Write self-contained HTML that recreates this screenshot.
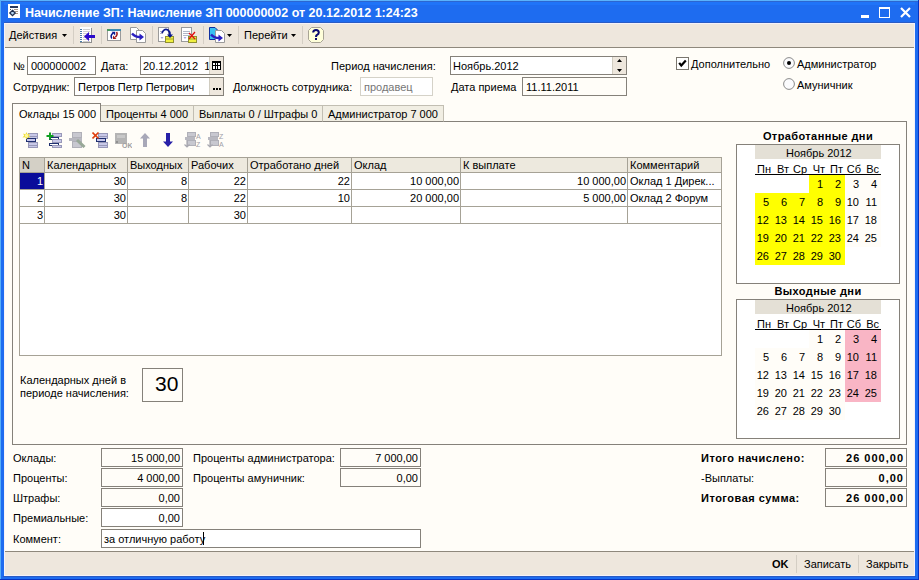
<!DOCTYPE html><html><head><meta charset="utf-8"><style>
html,body{margin:0;padding:0;}
body{width:919px;height:580px;overflow:hidden;position:relative;background:#FFFDF8;font-family:'Liberation Sans', sans-serif;}
.t{position:absolute;font-size:11px;line-height:13px;white-space:nowrap;color:#000;}
.b{position:absolute;box-sizing:border-box;}
svg{position:absolute;}
</style></head><body>
<div class="b" style="left:0px;top:0px;width:919px;height:580px;background:#1E6CF0;"></div>
<div class="b" style="left:0px;top:0px;width:919px;height:1px;background:#5AB2FC;"></div>
<div class="b" style="left:1px;top:1px;width:917px;height:1px;background:#2C66D0;"></div>
<div class="b" style="left:4px;top:2px;width:911px;height:3px;background:#2074F8;"></div>
<div class="b" style="left:0px;top:0px;width:1px;height:580px;background:#56AEF8;"></div>
<div class="b" style="left:918px;top:0px;width:1px;height:580px;background:#0634C2;"></div>
<div class="b" style="left:0px;top:579px;width:919px;height:1px;background:#0634C2;"></div>
<div class="b" style="left:4px;top:22px;width:911px;height:1px;background:#2A5CC4;"></div>
<div class="b" style="left:3px;top:576px;width:913px;height:1px;background:#2A5CC4;"></div>
<div class="b" style="left:4px;top:23px;width:911px;height:553px;background:#F4F2FA;"></div>
<div class="b" style="left:5px;top:24px;width:909px;height:551px;background:#FFFDF8;"></div>
<svg style="left:8px;top:4px" width="12" height="14" viewBox="0 0 12 14"><rect x="0" y="0" width="12" height="14" fill="#fff"/><rect x="2" y="2" width="8" height="2" fill="#28385C"/><rect x="2" y="5" width="1" height="1" fill="#505050"/><rect x="6" y="5" width="4" height="1" fill="#A89888"/><rect x="7" y="7" width="3" height="1" fill="#A89888"/><rect x="7" y="9" width="3" height="1" fill="#A89888"/><path d="M4.5 6.3 L7.2 9 L4.5 11.7 L1.8 9 Z" fill="#B8D8F0" stroke="#203050" stroke-width="1.3"/></svg>
<div class="t" style="left:25px;top:7px;color:#fff;font-weight:bold;font-size:12.5px;">Начисление ЗП: Начисление ЗП 000000002 от 20.12.2012 1:24:23</div>
<div class="b" style="left:861px;top:15px;width:8px;height:3px;background:#fff;"></div>
<div class="b" style="left:879px;top:7px;width:11px;height:11px;border:1px solid #fff;border-top-width:2px;"></div>
<svg style="left:900px;top:7px" width="11" height="11" viewBox="0 0 11 11"><path d="M1 1 L10 10 M10 1 L1 10" stroke="#fff" stroke-width="2.2"/></svg>
<div class="b" style="left:5px;top:24px;width:909px;height:23px;background:#EEE7DD;"></div>
<div class="b" style="left:5px;top:47px;width:909px;height:1px;background:#8E887C;"></div>
<div class="t" style="left:9px;top:29px;">Действия</div>
<svg style="left:62px;top:34px" width="5" height="3"><path d="M0 0 H5 L2.5 3 Z" fill="#000"/></svg>
<div class="b" style="left:73px;top:26px;width:1px;height:18px;background:#D4CEC4;"></div>
<div class="b" style="left:101px;top:26px;width:1px;height:18px;background:#D4CEC4;"></div>
<div class="b" style="left:152px;top:26px;width:1px;height:18px;background:#D4CEC4;"></div>
<div class="b" style="left:203px;top:26px;width:1px;height:18px;background:#D4CEC4;"></div>
<div class="b" style="left:238px;top:26px;width:1px;height:18px;background:#D4CEC4;"></div>
<div class="b" style="left:302px;top:26px;width:1px;height:18px;background:#D4CEC4;"></div>
<div class="t" style="left:244px;top:29px;">Перейти</div>
<svg style="left:291px;top:34px" width="5" height="3"><path d="M0 0 H5 L2.5 3 Z" fill="#000"/></svg>
<svg style="left:227px;top:34px" width="5" height="3"><path d="M0 0 H5 L2.5 3 Z" fill="#000"/></svg>
<div class="t" style="left:13px;top:60px;">№</div>
<div class="b" style="left:27px;top:56px;width:69px;height:19px;background:#fff;border:1px solid #85817A;"></div>
<div class="t" style="left:31px;top:60px;">000000002</div>
<div class="t" style="left:101px;top:60px;">Дата:</div>
<div class="b" style="left:140px;top:56px;width:84px;height:19px;background:#fff;border:1px solid #85817A;"></div>
<div class="t" style="left:143px;top:60px;">20.12.2012&nbsp; 1</div>
<div class="b" style="left:209px;top:57px;width:14px;height:17px;background:#EEE7DD;border-left:1px solid #D0CCC0;"></div>
<svg style="left:212px;top:61px" width="9" height="9" viewBox="0 0 9 9"><rect x="0" y="0" width="9" height="9" fill="#000"/><rect x="1" y="2" width="2" height="2" fill="#fff"/><rect x="4" y="2" width="1" height="2" fill="#fff"/><rect x="6" y="2" width="2" height="2" fill="#fff"/><rect x="1" y="5" width="2" height="3" fill="#fff"/><rect x="4" y="5" width="1" height="3" fill="#fff"/><rect x="6" y="5" width="2" height="3" fill="#fff"/></svg>
<div class="t" style="left:331px;top:60px;">Период начисления:</div>
<div class="b" style="left:450px;top:56px;width:177px;height:19px;background:#fff;border:1px solid #85817A;"></div>
<div class="t" style="left:453px;top:60px;">Ноябрь.2012</div>
<div class="b" style="left:612px;top:57px;width:14px;height:17px;background:#EEE7DD;border-left:1px solid #D0CCC0;"></div>
<svg style="left:617px;top:59px" width="5" height="13"><path d="M0 3 L2.5 0 L5 3 Z M0 10 L5 10 L2.5 13 Z" fill="#000"/></svg>
<div class="t" style="left:13px;top:81px;">Сотрудник:</div>
<div class="b" style="left:74px;top:77px;width:150px;height:19px;background:#fff;border:1px solid #85817A;"></div>
<div class="t" style="left:78px;top:81px;">Петров Петр Петрович</div>
<div class="b" style="left:209px;top:78px;width:14px;height:17px;background:#EEE7DD;border-left:1px solid #D0CCC0;"></div>
<svg style="left:213px;top:88px" width="8" height="2"><rect x="0" y="0" width="2" height="2" fill="#000"/><rect x="3" y="0" width="2" height="2" fill="#000"/><rect x="6" y="0" width="2" height="2" fill="#000"/></svg>
<div class="t" style="left:233px;top:81px;">Должность сотрудника:</div>
<div class="b" style="left:360px;top:77px;width:73px;height:19px;background:#fff;border:1px solid #D5D2C8;"></div>
<div class="t" style="left:364px;top:81px;color:#767676;">продавец</div>
<div class="t" style="left:451px;top:81px;">Дата приема</div>
<div class="b" style="left:522px;top:77px;width:105px;height:19px;background:#FFFDF8;border:1px solid #85817A;"></div>
<div class="t" style="left:526px;top:81px;">11.11.2011</div>
<div class="b" style="left:676px;top:57px;width:13px;height:13px;background:#fff;border:1px solid #7A766E;"></div>
<svg style="left:678px;top:59px" width="9" height="9" viewBox="0 0 9 9"><path d="M1.2 3.8 L3.3 6.6 L7.8 1.6" fill="none" stroke="#000" stroke-width="2.2"/></svg>
<div class="t" style="left:691px;top:58px;">Дополнительно</div>
<svg style="left:783px;top:57px" width="12" height="12" viewBox="0 0 12 12"><circle cx="6" cy="6" r="5.4" fill="#FBFBFD" stroke="#8A8A8A"/><circle cx="6" cy="6" r="2" fill="#000"/></svg>
<div class="t" style="left:797px;top:58px;">Администратор</div>
<svg style="left:783px;top:78px" width="12" height="12" viewBox="0 0 12 12"><circle cx="6" cy="6" r="5.4" fill="#FBFBFD" stroke="#8A8A8A"/></svg>
<div class="t" style="left:797px;top:79px;">Амуничник</div>
<div class="b" style="left:12px;top:121px;width:895px;height:324px;border:1px solid #85817A;"></div>
<div class="b" style="left:100px;top:105px;width:94px;height:17px;background:#F1EEE3;border:1px solid #C2BEB2;border-bottom-color:#85817A;"></div>
<div class="b" style="left:193px;top:105px;width:130px;height:17px;background:#F1EEE3;border:1px solid #C2BEB2;border-bottom-color:#85817A;"></div>
<div class="b" style="left:322px;top:105px;width:122px;height:17px;background:#F1EEE3;border:1px solid #C2BEB2;border-bottom-color:#85817A;"></div>
<div class="b" style="left:12px;top:103px;width:89px;height:19px;background:#FFFDF8;border:1px solid #85817A;border-bottom:none;"></div>
<div class="t" style="left:19px;top:108px;">Оклады 15 000</div>
<div class="t" style="left:106px;top:108px;">Проценты 4 000</div>
<div class="t" style="left:199px;top:108px;">Выплаты 0 / Штрафы 0</div>
<div class="t" style="left:328px;top:108px;">Администратор 7 000</div>
<div class="b" style="left:19px;top:157px;width:703px;height:199px;background:#fff;border:1px solid #A6A296;"></div>
<div class="b" style="left:20px;top:158px;width:701px;height:14px;background:#EDE9DE;"></div>
<div class="b" style="left:20px;top:158px;width:24px;height:14px;background:#D4D0C6;"></div>
<div class="t" style="left:22px;top:159px;">N</div>
<div class="t" style="left:47px;top:159px;">Календарных</div>
<div class="t" style="left:130px;top:159px;">Выходных</div>
<div class="t" style="left:191px;top:159px;">Рабочих</div>
<div class="t" style="left:250px;top:159px;">Отработано дней</div>
<div class="t" style="left:354px;top:159px;">Оклад</div>
<div class="t" style="left:463px;top:159px;">К выплате</div>
<div class="t" style="left:630px;top:159px;">Комментарий</div>
<div class="b" style="left:44px;top:158px;width:1px;height:66px;background:#A6A296;"></div>
<div class="b" style="left:127px;top:158px;width:1px;height:66px;background:#A6A296;"></div>
<div class="b" style="left:188px;top:158px;width:1px;height:66px;background:#A6A296;"></div>
<div class="b" style="left:247px;top:158px;width:1px;height:66px;background:#A6A296;"></div>
<div class="b" style="left:351px;top:158px;width:1px;height:66px;background:#A6A296;"></div>
<div class="b" style="left:460px;top:158px;width:1px;height:66px;background:#A6A296;"></div>
<div class="b" style="left:627px;top:158px;width:1px;height:66px;background:#A6A296;"></div>
<div class="b" style="left:20px;top:172px;width:701px;height:1px;background:#A6A296;"></div>
<div class="b" style="left:20px;top:189px;width:701px;height:1px;background:#A6A296;"></div>
<div class="b" style="left:20px;top:206px;width:701px;height:1px;background:#A6A296;"></div>
<div class="b" style="left:20px;top:223px;width:701px;height:1px;background:#A6A296;"></div>
<div class="b" style="left:20px;top:173px;width:24px;height:16px;background:#0A0C9A;"></div>
<div class="t" style="right:876px;top:175px;color:#fff;">1</div>
<div class="t" style="right:793px;top:175px;">30</div>
<div class="t" style="right:732px;top:175px;">8</div>
<div class="t" style="right:673px;top:175px;">22</div>
<div class="t" style="right:569px;top:175px;">22</div>
<div class="t" style="right:460px;top:175px;">10 000,00</div>
<div class="t" style="right:293px;top:175px;">10 000,00</div>
<div class="t" style="left:630px;top:175px;">Оклад 1 Дирек...</div>
<div class="t" style="right:876px;top:192px;">2</div>
<div class="t" style="right:793px;top:192px;">30</div>
<div class="t" style="right:732px;top:192px;">8</div>
<div class="t" style="right:673px;top:192px;">22</div>
<div class="t" style="right:569px;top:192px;">10</div>
<div class="t" style="right:460px;top:192px;">20 000,00</div>
<div class="t" style="right:293px;top:192px;">5 000,00</div>
<div class="t" style="left:630px;top:192px;">Оклад 2 Форум</div>
<div class="t" style="right:876px;top:209px;">3</div>
<div class="t" style="right:793px;top:209px;">30</div>
<div class="t" style="right:673px;top:209px;">30</div>
<div class="t" style="left:20px;top:374px;">Календарных дней в</div>
<div class="t" style="left:20px;top:387px;">периоде начисления:</div>
<div class="b" style="left:142px;top:368px;width:41px;height:34px;background:#FFFDF8;border:1px solid #85817A;"></div>
<div class="t" style="left:155px;top:372px;font-size:21px;line-height:24px;">30</div>
<div class="t" style="left:718px;width:200px;text-align:center;top:130px;font-weight:bold;letter-spacing:0.4px;">Отработанные дни</div>
<div class="b" style="left:736px;top:144px;width:164px;height:140px;background:#fff;border:1px solid #85817A;"></div>
<div class="b" style="left:755px;top:145px;width:126px;height:14px;background:#E4E0D6;"></div>
<div class="t" style="left:786px;top:147px;">Ноябрь 2012</div>
<div class="t" style="right:148px;top:163px;">Пн</div>
<div class="t" style="right:130px;top:163px;">Вт</div>
<div class="t" style="right:112px;top:163px;">Ср</div>
<div class="t" style="right:94px;top:163px;">Чт</div>
<div class="t" style="right:76px;top:163px;">Пт</div>
<div class="t" style="right:58px;top:163px;">Сб</div>
<div class="t" style="right:40px;top:163px;">Вс</div>
<div class="b" style="left:755px;top:174px;width:126px;height:1px;background:#000;"></div>
<div class="b" style="left:809px;top:175px;width:18px;height:18px;background:#FFFF00;"></div>
<div class="b" style="left:827px;top:175px;width:18px;height:18px;background:#FFFF00;"></div>
<div class="b" style="left:845px;top:175px;width:18px;height:18px;background:#FFFDF8;"></div>
<div class="b" style="left:863px;top:175px;width:18px;height:18px;background:#FFFDF8;"></div>
<div class="b" style="left:755px;top:193px;width:18px;height:18px;background:#FFFF00;"></div>
<div class="b" style="left:773px;top:193px;width:18px;height:18px;background:#FFFF00;"></div>
<div class="b" style="left:791px;top:193px;width:18px;height:18px;background:#FFFF00;"></div>
<div class="b" style="left:809px;top:193px;width:18px;height:18px;background:#FFFF00;"></div>
<div class="b" style="left:827px;top:193px;width:18px;height:18px;background:#FFFF00;"></div>
<div class="b" style="left:845px;top:193px;width:18px;height:18px;background:#FFFDF8;"></div>
<div class="b" style="left:863px;top:193px;width:18px;height:18px;background:#FFFDF8;"></div>
<div class="b" style="left:755px;top:211px;width:18px;height:18px;background:#FFFF00;"></div>
<div class="b" style="left:773px;top:211px;width:18px;height:18px;background:#FFFF00;"></div>
<div class="b" style="left:791px;top:211px;width:18px;height:18px;background:#FFFF00;"></div>
<div class="b" style="left:809px;top:211px;width:18px;height:18px;background:#FFFF00;"></div>
<div class="b" style="left:827px;top:211px;width:18px;height:18px;background:#FFFF00;"></div>
<div class="b" style="left:845px;top:211px;width:18px;height:18px;background:#FFFDF8;"></div>
<div class="b" style="left:863px;top:211px;width:18px;height:18px;background:#FFFDF8;"></div>
<div class="b" style="left:755px;top:229px;width:18px;height:18px;background:#FFFF00;"></div>
<div class="b" style="left:773px;top:229px;width:18px;height:18px;background:#FFFF00;"></div>
<div class="b" style="left:791px;top:229px;width:18px;height:18px;background:#FFFF00;"></div>
<div class="b" style="left:809px;top:229px;width:18px;height:18px;background:#FFFF00;"></div>
<div class="b" style="left:827px;top:229px;width:18px;height:18px;background:#FFFF00;"></div>
<div class="b" style="left:845px;top:229px;width:18px;height:18px;background:#FFFDF8;"></div>
<div class="b" style="left:863px;top:229px;width:18px;height:18px;background:#FFFDF8;"></div>
<div class="b" style="left:755px;top:247px;width:18px;height:18px;background:#FFFF00;"></div>
<div class="b" style="left:773px;top:247px;width:18px;height:18px;background:#FFFF00;"></div>
<div class="b" style="left:791px;top:247px;width:18px;height:18px;background:#FFFF00;"></div>
<div class="b" style="left:809px;top:247px;width:18px;height:18px;background:#FFFF00;"></div>
<div class="b" style="left:827px;top:247px;width:18px;height:18px;background:#FFFF00;"></div>
<div class="t" style="right:96px;top:178px;">1</div>
<div class="t" style="right:78px;top:178px;">2</div>
<div class="t" style="right:60px;top:178px;">3</div>
<div class="t" style="right:42px;top:178px;">4</div>
<div class="t" style="right:150px;top:196px;">5</div>
<div class="t" style="right:132px;top:196px;">6</div>
<div class="t" style="right:114px;top:196px;">7</div>
<div class="t" style="right:96px;top:196px;">8</div>
<div class="t" style="right:78px;top:196px;">9</div>
<div class="t" style="right:60px;top:196px;">10</div>
<div class="t" style="right:42px;top:196px;">11</div>
<div class="t" style="right:150px;top:214px;">12</div>
<div class="t" style="right:132px;top:214px;">13</div>
<div class="t" style="right:114px;top:214px;">14</div>
<div class="t" style="right:96px;top:214px;">15</div>
<div class="t" style="right:78px;top:214px;">16</div>
<div class="t" style="right:60px;top:214px;">17</div>
<div class="t" style="right:42px;top:214px;">18</div>
<div class="t" style="right:150px;top:232px;">19</div>
<div class="t" style="right:132px;top:232px;">20</div>
<div class="t" style="right:114px;top:232px;">21</div>
<div class="t" style="right:96px;top:232px;">22</div>
<div class="t" style="right:78px;top:232px;">23</div>
<div class="t" style="right:60px;top:232px;">24</div>
<div class="t" style="right:42px;top:232px;">25</div>
<div class="t" style="right:150px;top:250px;">26</div>
<div class="t" style="right:132px;top:250px;">27</div>
<div class="t" style="right:114px;top:250px;">28</div>
<div class="t" style="right:96px;top:250px;">29</div>
<div class="t" style="right:78px;top:250px;">30</div>
<div class="t" style="left:718px;width:200px;text-align:center;top:285px;font-weight:bold;letter-spacing:0.4px;">Выходные дни</div>
<div class="b" style="left:736px;top:299px;width:164px;height:140px;background:#fff;border:1px solid #85817A;"></div>
<div class="b" style="left:755px;top:300px;width:126px;height:14px;background:#E4E0D6;"></div>
<div class="t" style="left:786px;top:302px;">Ноябрь 2012</div>
<div class="t" style="right:148px;top:318px;">Пн</div>
<div class="t" style="right:130px;top:318px;">Вт</div>
<div class="t" style="right:112px;top:318px;">Ср</div>
<div class="t" style="right:94px;top:318px;">Чт</div>
<div class="t" style="right:76px;top:318px;">Пт</div>
<div class="t" style="right:58px;top:318px;">Сб</div>
<div class="t" style="right:40px;top:318px;">Вс</div>
<div class="b" style="left:755px;top:329px;width:126px;height:1px;background:#000;"></div>
<div class="b" style="left:809px;top:330px;width:18px;height:18px;background:#FFFDF8;"></div>
<div class="b" style="left:827px;top:330px;width:18px;height:18px;background:#FFFDF8;"></div>
<div class="b" style="left:845px;top:330px;width:18px;height:18px;background:#F9B5C5;"></div>
<div class="b" style="left:863px;top:330px;width:18px;height:18px;background:#F9B5C5;"></div>
<div class="b" style="left:755px;top:348px;width:18px;height:18px;background:#FFFDF8;"></div>
<div class="b" style="left:773px;top:348px;width:18px;height:18px;background:#FFFDF8;"></div>
<div class="b" style="left:791px;top:348px;width:18px;height:18px;background:#FFFDF8;"></div>
<div class="b" style="left:809px;top:348px;width:18px;height:18px;background:#FFFDF8;"></div>
<div class="b" style="left:827px;top:348px;width:18px;height:18px;background:#FFFDF8;"></div>
<div class="b" style="left:845px;top:348px;width:18px;height:18px;background:#F9B5C5;"></div>
<div class="b" style="left:863px;top:348px;width:18px;height:18px;background:#F9B5C5;"></div>
<div class="b" style="left:755px;top:366px;width:18px;height:18px;background:#FFFDF8;"></div>
<div class="b" style="left:773px;top:366px;width:18px;height:18px;background:#FFFDF8;"></div>
<div class="b" style="left:791px;top:366px;width:18px;height:18px;background:#FFFDF8;"></div>
<div class="b" style="left:809px;top:366px;width:18px;height:18px;background:#FFFDF8;"></div>
<div class="b" style="left:827px;top:366px;width:18px;height:18px;background:#FFFDF8;"></div>
<div class="b" style="left:845px;top:366px;width:18px;height:18px;background:#F9B5C5;"></div>
<div class="b" style="left:863px;top:366px;width:18px;height:18px;background:#F9B5C5;"></div>
<div class="b" style="left:755px;top:384px;width:18px;height:18px;background:#FFFDF8;"></div>
<div class="b" style="left:773px;top:384px;width:18px;height:18px;background:#FFFDF8;"></div>
<div class="b" style="left:791px;top:384px;width:18px;height:18px;background:#FFFDF8;"></div>
<div class="b" style="left:809px;top:384px;width:18px;height:18px;background:#FFFDF8;"></div>
<div class="b" style="left:827px;top:384px;width:18px;height:18px;background:#FFFDF8;"></div>
<div class="b" style="left:845px;top:384px;width:18px;height:18px;background:#F9B5C5;"></div>
<div class="b" style="left:863px;top:384px;width:18px;height:18px;background:#F9B5C5;"></div>
<div class="b" style="left:755px;top:402px;width:18px;height:18px;background:#FFFDF8;"></div>
<div class="b" style="left:773px;top:402px;width:18px;height:18px;background:#FFFDF8;"></div>
<div class="b" style="left:791px;top:402px;width:18px;height:18px;background:#FFFDF8;"></div>
<div class="b" style="left:809px;top:402px;width:18px;height:18px;background:#FFFDF8;"></div>
<div class="b" style="left:827px;top:402px;width:18px;height:18px;background:#FFFDF8;"></div>
<div class="t" style="right:96px;top:333px;">1</div>
<div class="t" style="right:78px;top:333px;">2</div>
<div class="t" style="right:60px;top:333px;">3</div>
<div class="t" style="right:42px;top:333px;">4</div>
<div class="t" style="right:150px;top:351px;">5</div>
<div class="t" style="right:132px;top:351px;">6</div>
<div class="t" style="right:114px;top:351px;">7</div>
<div class="t" style="right:96px;top:351px;">8</div>
<div class="t" style="right:78px;top:351px;">9</div>
<div class="t" style="right:60px;top:351px;">10</div>
<div class="t" style="right:42px;top:351px;">11</div>
<div class="t" style="right:150px;top:369px;">12</div>
<div class="t" style="right:132px;top:369px;">13</div>
<div class="t" style="right:114px;top:369px;">14</div>
<div class="t" style="right:96px;top:369px;">15</div>
<div class="t" style="right:78px;top:369px;">16</div>
<div class="t" style="right:60px;top:369px;">17</div>
<div class="t" style="right:42px;top:369px;">18</div>
<div class="t" style="right:150px;top:387px;">19</div>
<div class="t" style="right:132px;top:387px;">20</div>
<div class="t" style="right:114px;top:387px;">21</div>
<div class="t" style="right:96px;top:387px;">22</div>
<div class="t" style="right:78px;top:387px;">23</div>
<div class="t" style="right:60px;top:387px;">24</div>
<div class="t" style="right:42px;top:387px;">25</div>
<div class="t" style="right:150px;top:405px;">26</div>
<div class="t" style="right:132px;top:405px;">27</div>
<div class="t" style="right:114px;top:405px;">28</div>
<div class="t" style="right:96px;top:405px;">29</div>
<div class="t" style="right:78px;top:405px;">30</div>
<div class="t" style="left:13px;top:452px;">Оклады:</div>
<div class="b" style="left:101px;top:448px;width:82px;height:19px;background:#FFFDF8;border:1px solid #85817A;"></div>
<div class="t" style="right:739px;top:452px;">15 000,00</div>
<div class="t" style="left:13px;top:472px;">Проценты:</div>
<div class="b" style="left:101px;top:468px;width:82px;height:19px;background:#FFFDF8;border:1px solid #85817A;"></div>
<div class="t" style="right:739px;top:472px;">4 000,00</div>
<div class="t" style="left:13px;top:492px;">Штрафы:</div>
<div class="b" style="left:101px;top:488px;width:82px;height:19px;background:#FFFDF8;border:1px solid #85817A;"></div>
<div class="t" style="right:739px;top:492px;">0,00</div>
<div class="t" style="left:13px;top:512px;">Премиальные:</div>
<div class="b" style="left:101px;top:508px;width:82px;height:19px;background:#fff;border:1px solid #85817A;"></div>
<div class="t" style="right:739px;top:512px;">0,00</div>
<div class="t" style="left:193px;top:452px;">Проценты администратора:</div>
<div class="b" style="left:340px;top:448px;width:81px;height:19px;background:#FFFDF8;border:1px solid #85817A;"></div>
<div class="t" style="right:501px;top:452px;">7 000,00</div>
<div class="t" style="left:193px;top:472px;">Проценты амуничник:</div>
<div class="b" style="left:340px;top:468px;width:81px;height:19px;background:#FFFDF8;border:1px solid #85817A;"></div>
<div class="t" style="right:501px;top:472px;">0,00</div>
<div class="t" style="left:13px;top:533px;">Коммент:</div>
<div class="b" style="left:101px;top:529px;width:320px;height:19px;background:#fff;border:1px solid #85817A;"></div>
<div class="t" style="left:104px;top:533px;">за отличную работу</div>
<div class="b" style="left:203px;top:532px;width:1px;height:13px;background:#000;"></div>
<div class="t" style="left:701px;top:452px;font-weight:bold;letter-spacing:0.5px;">Итого начислено:</div>
<div class="b" style="left:825px;top:448px;width:82px;height:19px;background:#FFFDF8;border:1px solid #85817A;"></div>
<div class="t" style="right:15px;top:452px;font-weight:bold;letter-spacing:1px;">26 000,00</div>
<div class="t" style="left:701px;top:472px;">-Выплаты:</div>
<div class="b" style="left:825px;top:468px;width:82px;height:19px;background:#FFFDF8;border:1px solid #85817A;"></div>
<div class="t" style="right:15px;top:472px;font-weight:bold;letter-spacing:1px;">0,00</div>
<div class="t" style="left:701px;top:492px;font-weight:bold;letter-spacing:0.5px;">Итоговая сумма:</div>
<div class="b" style="left:825px;top:488px;width:82px;height:19px;background:#FFFDF8;border:1px solid #85817A;"></div>
<div class="t" style="right:15px;top:492px;font-weight:bold;letter-spacing:1px;">26 000,00</div>
<svg style="left:79px;top:27px" width="16" height="16" viewBox="0 0 16 16"><rect x="1" y="0" width="11" height="15" fill="#fff"/><rect x="12" y="1" width="1" height="15" fill="#909090"/><rect x="1" y="15" width="12" height="1" fill="#909090"/><rect x="1" y="2" width="2" height="1" fill="#4A7CA8"/><rect x="4" y="2" width="7" height="1" fill="#D0D0D0"/><rect x="1" y="4" width="2" height="1" fill="#4A7CA8"/><rect x="4" y="4" width="7" height="1" fill="#D0D0D0"/><rect x="1" y="6" width="2" height="1" fill="#4A7CA8"/><rect x="4" y="6" width="7" height="1" fill="#D0D0D0"/><rect x="1" y="8" width="2" height="1" fill="#4A7CA8"/><rect x="4" y="8" width="7" height="1" fill="#D0D0D0"/><rect x="1" y="10" width="2" height="1" fill="#4A7CA8"/><rect x="4" y="10" width="7" height="1" fill="#D0D0D0"/><rect x="1" y="12" width="2" height="1" fill="#4A7CA8"/><rect x="4" y="12" width="7" height="1" fill="#D0D0D0"/><rect x="1" y="14" width="2" height="1" fill="#4A7CA8"/><rect x="4" y="14" width="7" height="1" fill="#D0D0D0"/><path d="M5 9.5 L10 5 L10 8 L16 8 L16 11 L10 11 L10 14 Z" fill="#2A0ACB"/></svg>
<svg style="left:107px;top:29px" width="14" height="12" viewBox="0 0 14 12"><rect x="0.5" y="0.5" width="13" height="11" fill="#fff" stroke="#9A9A9A"/><rect x="3" y="0" width="11" height="2" fill="#3E8CB0"/><rect x="0" y="0" width="3" height="2" fill="#4A9A60"/><path d="M4.8 9.5 Q3 6.5 6 4.2" fill="none" stroke="#0A1A90" stroke-width="1.5"/><path d="M4.5 2.8 L8.2 2.8 L8.2 6.5 Z" fill="#0A1A90"/><path d="M9.5 3 Q11.2 5.5 8.2 8.3" fill="none" stroke="#A01818" stroke-width="1.5"/><path d="M6 10 L9.5 10 L6 6.5 Z" fill="#A01818"/></svg>
<svg style="left:130px;top:27px" width="16" height="16" viewBox="0 0 16 16"><path d="M0.5 0.5 H6.5 L9.5 3.5 V12.5 H0.5 Z" fill="#fff" stroke="#9A9A9A"/><path d="M6.5 3.5 H9.5 V15.5 H0 M6.5 3.5 V15.5" fill="none"/><path d="M6.5 3.5 H12.5 L15.5 6.5 V15.5 H6.5 Z" fill="#fff" stroke="#9A9A9A"/><path d="M2 6.5 Q5 10 10 10" fill="none" stroke="#2A20C0" stroke-width="2.4"/><path d="M9.5 6.5 L14 10 L9.5 13.5 Z" fill="#2A20C0"/></svg>
<svg style="left:158px;top:27px" width="16" height="16" viewBox="0 0 16 16"><rect x="0.5" y="0.5" width="10" height="14" fill="#fff" stroke="#9A9A9A"/><rect x="2" y="4" width="3" height="1" fill="#B0B0C8"/><rect x="2" y="6" width="3" height="1" fill="#B0B0C8"/><path d="M2.5 10 H5.5 L4 12 Z" fill="#A8A8E0"/><rect x="7.5" y="9.5" width="8" height="6" fill="#F0F040" stroke="#909030"/><rect x="8" y="11.5" width="7" height="1" fill="#A0A030"/><path d="M4 6 Q6 1 10 3 Q12 4.5 12 8" fill="none" stroke="#0A1890" stroke-width="1.8"/><path d="M9 7.5 H15 L12 11 Z" fill="#0A1890"/></svg>
<svg style="left:181px;top:27px" width="16" height="16" viewBox="0 0 16 16"><rect x="0.5" y="0.5" width="10" height="14" fill="#fff" stroke="#9A9A9A"/><rect x="2" y="4" width="7" height="1" fill="#B0B8C8"/><rect x="2" y="6" width="7" height="1" fill="#B0B8C8"/><rect x="2" y="8" width="7" height="1" fill="#B0B8C8"/><path d="M2.5 10 H5.5 L4 12 Z" fill="#A8A8E0"/><rect x="7.5" y="9.5" width="8" height="6" fill="#F0F040" stroke="#909030"/><rect x="8" y="11.5" width="7" height="1" fill="#A0A030"/><path d="M8 6 L14 12 M14 5 L8 12" stroke="#E01010" stroke-width="1.3"/></svg>
<svg style="left:209px;top:27px" width="16" height="16" viewBox="0 0 16 16"><path d="M0.5 0.5 H6 L9.5 4 V12.5 H0.5 Z" fill="#38C0F0" stroke="#1030A0"/><path d="M6.5 3.5 H12.5 L15.5 6.5 V15.5 H6.5 Z" fill="#fff" stroke="#9A9A9A"/><path d="M2 7.5 Q5 11 10 11" fill="none" stroke="#2A20C0" stroke-width="2.4"/><path d="M9.5 7.5 L14 11 L9.5 14.5 Z" fill="#2A20C0"/></svg>
<svg style="left:308px;top:27px" width="16" height="16" viewBox="0 0 16 16"><path d="M3.5 0.5 H12.5 L15.5 3.5 V12.5 L12.5 15.5 H3.5 L0.5 12.5 V3.5 Z" fill="#FFFFDA" stroke="#A8A494"/><path d="M5.2 5.5 Q5.2 3 8 3 Q10.8 3 10.8 5.5 Q10.8 7 9 8 Q8 8.5 8 10" fill="none" stroke="#0A0A70" stroke-width="2"/><rect x="7" y="11" width="2" height="2" fill="#0A0A70"/></svg>
<svg style="left:22px;top:132px" width="17" height="16" viewBox="0 0 17 16"><rect x="6.5" y="1.5" width="9" height="5" fill="#C8C8E8" stroke="#9898B8"/><rect x="4.5" y="6.5" width="9" height="3" fill="#C8C8EC" stroke="#203070"/><rect x="6.5" y="10.5" width="9" height="5" fill="#C8C8E8" stroke="#9898B8"/><rect x="7" y="4" width="8" height="1" fill="#9898B8"/><rect x="7" y="13" width="8" height="1" fill="#9898B8"/><path d="M4.5 0 L5.5 2.3 L8 1.5 L6.8 3.5 L8.5 5.5 L5.8 5.3 L4.5 7.5 L3.3 5.3 L0.5 5.5 L2.2 3.5 L1 1.5 L3.5 2.3 Z" fill="#F0E040"/><circle cx="4.5" cy="3.7" r="1.6" fill="#FFF8A0"/></svg>
<svg style="left:46px;top:132px" width="17" height="16" viewBox="0 0 17 16"><rect x="6.5" y="1.5" width="9" height="3" fill="#C8C8E8" stroke="#9898B8"/><rect x="3.5" y="5.5" width="9" height="2" fill="#fff" stroke="#203070"/><rect x="6.5" y="7.5" width="9" height="3" fill="#C8C8E8" stroke="#9898B8"/><rect x="3.5" y="11.5" width="9" height="2" fill="#fff" stroke="#203070"/><rect x="6.5" y="13.5" width="9" height="2" fill="#C8C8E8" stroke="#9898B8"/><path d="M4 0.5 V7.5 M0.5 4 H7.5" stroke="#10A020" stroke-width="2"/></svg>
<svg style="left:69px;top:132px" width="17" height="16" viewBox="0 0 17 16"><rect x="3.5" y="0.5" width="9" height="5" fill="#C8C8D0" stroke="#B0B0B8"/><rect x="0" y="6" width="13" height="3" fill="#B8B8C0"/><rect x="3.5" y="9.5" width="9" height="6" fill="#C8C8D0" stroke="#B0B0B8"/><path d="M8 8 L15.5 15" stroke="#98A898" stroke-width="3"/></svg>
<svg style="left:92px;top:132px" width="17" height="16" viewBox="0 0 17 16"><rect x="6.5" y="1.5" width="9" height="5" fill="#C8C8E8" stroke="#9898B8"/><rect x="4.5" y="6.5" width="9" height="3" fill="#C8C8EC" stroke="#203070"/><rect x="6.5" y="10.5" width="9" height="5" fill="#C8C8E8" stroke="#9898B8"/><rect x="7" y="4" width="8" height="1" fill="#9898B8"/><rect x="7" y="13" width="8" height="1" fill="#9898B8"/><path d="M0.5 0.5 L6.5 6.5 M6.5 0.5 L0.5 6.5" stroke="#E04010" stroke-width="1.6"/></svg>
<svg style="left:115px;top:133px" width="17" height="15" viewBox="0 0 17 15"><rect x="0" y="0" width="12" height="11" fill="#B4B4B4"/><rect x="2" y="2" width="8" height="3" fill="#C8C8C8"/><rect x="1" y="8" width="2" height="2" fill="#909090"/><text x="7" y="14.5" font-family="Liberation Sans" font-size="7" font-weight="bold" fill="#A0A0A0">OK</text></svg>
<svg style="left:140px;top:133px" width="11" height="15" viewBox="0 0 11 15"><path d="M5 0 L10 5.5 L7 5.5 L7 14 L3 14 L3 5.5 L0 5.5 Z" fill="#A8A8B8"/></svg>
<svg style="left:163px;top:133px" width="11" height="15" viewBox="0 0 11 15"><path d="M5 14 L10 8.5 L7 8.5 L7 0 L3 0 L3 8.5 L0 8.5 Z" fill="#2820A8"/></svg>
<svg style="left:184px;top:132px" width="17" height="16" viewBox="0 0 17 16"><rect x="3.5" y="0.5" width="8" height="4" fill="#C8C8D0" stroke="#B0B0B8"/><rect x="1" y="5" width="10" height="3" fill="#B8B8C0"/><rect x="3.5" y="8.5" width="8" height="5" fill="#C8C8D0" stroke="#B0B0B8"/><path d="M3 8 V15 M0.5 12.5 L3 15 L5.5 12.5" fill="none" stroke="#A8A8B0" stroke-width="1.2"/><text x="12" y="7" font-family="Liberation Sans" font-size="7" fill="#A0A0A8">A</text><text x="12" y="15" font-family="Liberation Sans" font-size="7" fill="#A0A0A8">Z</text></svg>
<svg style="left:207px;top:132px" width="17" height="16" viewBox="0 0 17 16"><rect x="3.5" y="0.5" width="8" height="4" fill="#C8C8D0" stroke="#B0B0B8"/><rect x="1" y="5" width="10" height="3" fill="#B8B8C0"/><rect x="3.5" y="8.5" width="8" height="5" fill="#C8C8D0" stroke="#B0B0B8"/><path d="M3 8 V15 M0.5 12.5 L3 15 L5.5 12.5" fill="none" stroke="#A8A8B0" stroke-width="1.2"/><text x="12" y="7" font-family="Liberation Sans" font-size="7" fill="#A0A0A8">Z</text><text x="12" y="15" font-family="Liberation Sans" font-size="7" fill="#A0A0A8">A</text></svg>
<div class="b" style="left:5px;top:552px;width:909px;height:23px;background:#EEE7DD;"></div>
<div class="b" style="left:5px;top:551px;width:909px;height:1px;background:#8E887C;"></div>
<div class="t" style="left:772px;top:558px;font-weight:bold;">OK</div>
<div class="b" style="left:796px;top:555px;width:1px;height:18px;background:#D4CEC4;"></div>
<div class="b" style="left:858px;top:555px;width:1px;height:18px;background:#D4CEC4;"></div>
<div class="t" style="left:804px;top:558px;">Записать</div>
<div class="t" style="left:866px;top:558px;">Закрыть</div>
</body></html>
